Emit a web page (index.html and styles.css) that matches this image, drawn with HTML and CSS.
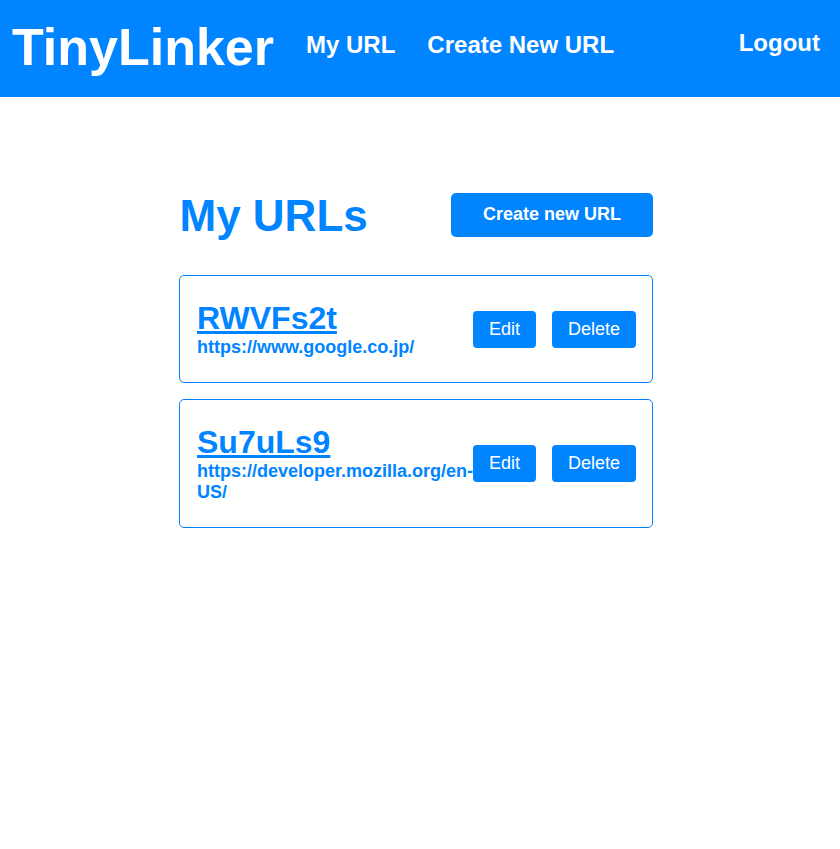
FILE: index.html
```html
<!DOCTYPE html>
<html lang="en">
<head>
<meta charset="utf-8">
<title>TinyLinker</title>
<link rel="stylesheet" href="styles.css">
</head>
<body>
<header class="topbar">
  <div class="brand">TinyLinker</div>
  <nav class="nav">
    <a class="nav-link" href="#">My URL</a>
    <a class="nav-link" href="#">Create New URL</a>
  </nav>
  <a class="logout" href="#">Logout</a>
</header>
<main class="content">
  <div class="page-head">
    <h1 class="page-title">My URLs</h1>
    <button class="btn btn-lg">Create new URL</button>
  </div>
  <ul class="url-list">
    <li class="url-card">
      <div class="url-info">
        <a class="short" href="#">RWVFs2t</a>
        <div class="long">https://www.google.co.jp/</div>
      </div>
      <div class="actions">
        <button class="btn">Edit</button>
        <button class="btn">Delete</button>
      </div>
    </li>
    <li class="url-card">
      <div class="url-info">
        <a class="short" href="#">Su7uLs9</a>
        <div class="long">https://developer.mozilla.org/en-US/</div>
      </div>
      <div class="actions">
        <button class="btn">Edit</button>
        <button class="btn">Delete</button>
      </div>
    </li>
  </ul>
</main>
</body>
</html>
```
FILE: styles.css
```css
* { box-sizing: border-box; }
body {
  margin: 0;
  font-family: "Liberation Sans", Arial, sans-serif;
  background: #fff;
  color: #0084ff;
}
a { text-decoration: none; }

.topbar {
  display: flex;
  align-items: flex-start;
  height: 97px;
  padding: 17px 20px 0 12px;
  background: #0084ff;
}
.brand {
  font-size: 52px;
  font-weight: bold;
  color: #fff;
  line-height: normal;
}
.nav {
  display: flex;
  gap: 32px;
  margin-left: 32px;
  margin-top: 14px;
  flex: 1;
}
.nav-link, .logout {
  color: #fff;
  font-size: 24px;
  font-weight: bold;
  line-height: normal;
}
.logout { margin-top: 11.5px; }

.content {
  width: 474px;
  margin: 94px 0 0 179px;
}
.page-head {
  display: flex;
  align-items: flex-start;
  justify-content: space-between;
  margin-bottom: 34px;
}
.page-title {
  margin: 0 0 0 0.5px;
  font-size: 44px;
  font-weight: bold;
  line-height: normal;
}
.btn {
  font-family: inherit;
  font-size: 18px;
  line-height: 21px;
  color: #fff;
  background: #0084ff;
  border: none;
  border-radius: 4px;
  padding: 8px 16px;
  white-space: nowrap;
  cursor: pointer;
}
.btn-lg {
  font-weight: bold;
  margin-top: 2px;
  padding: 11px 0 12px;
  border-radius: 5px;
  width: 202px;
  text-align: center;
}
.url-list {
  list-style: none;
  margin: 0;
  padding: 0;
  display: flex;
  flex-direction: column;
  gap: 16px;
}
.url-card {
  display: flex;
  align-items: center;
  border: 1px solid #0084ff;
  border-radius: 5px;
  padding: 24px 16px 24px 17px;
}
.url-info {
  flex: 1;
  min-width: 0;
  display: flex;
  flex-direction: column;
  align-items: flex-start;
}
.short {
  font-size: 32px;
  font-weight: bold;
  color: #0084ff;
  text-decoration: underline;
  line-height: normal;
}
.long {
  font-size: 18px;
  font-weight: bold;
  line-height: normal;
}
.actions {
  display: flex;
  gap: 16px;
  flex-shrink: 0;
}
```
